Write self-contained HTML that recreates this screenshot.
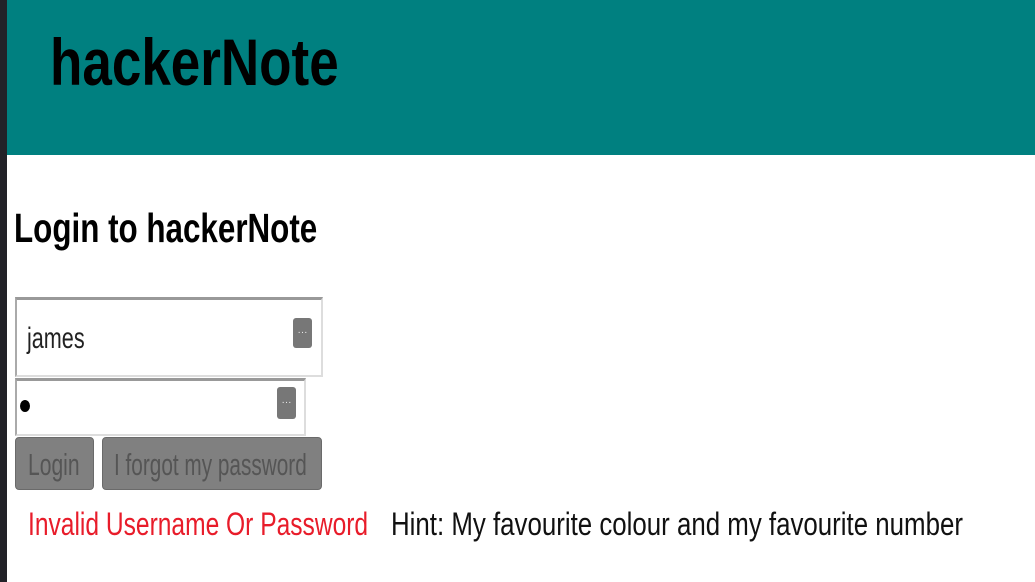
<!DOCTYPE html>
<html><head><style>
body{margin:0;width:1035px;height:582px;overflow:hidden;background:#fff;font-family:"Liberation Sans",sans-serif;position:relative}
.strip{position:absolute;left:0;top:0;width:7px;height:582px;background:#222228}
.hdr{position:absolute;left:7px;top:0;width:1028px;height:155px;background:#008080}
.t{position:absolute;white-space:nowrap;transform-origin:0 0}
.in{position:absolute;background:#fff;border:2px solid #ddd;border-top:3px solid #999;border-left:2px solid #aaa;box-sizing:border-box}
.ic{position:absolute;background:#777;border-radius:3px;color:#eee;font-size:10px;text-align:center}
.btn{position:absolute;background:#808080;border-radius:4px;color:#555;border:1px solid #6a6a6a;box-sizing:border-box}
</style></head><body>
<div class="strip"></div>
<div class="hdr"></div>
<div class="t" style="left:50px;top:24px;font-size:66px;font-weight:bold;color:#000;transform:scaleX(0.803)">hackerNote</div>
<div class="t" style="left:14px;top:205px;font-size:41px;font-weight:bold;transform:scaleX(0.765)">Login to hackerNote</div>
<div class="in" style="left:15px;top:297px;width:308px;height:80px"></div>
<div class="t" style="left:27px;top:322px;font-size:30px;color:#222;transform:scaleX(0.72)">james</div>
<div class="ic" style="left:293px;top:318px;width:19px;height:30px;line-height:30px">···</div>
<div class="in" style="left:15px;top:378px;width:291px;height:58px"></div>
<div style="position:absolute;left:20px;top:400px;width:10px;height:12px;border-radius:50%;background:#000"></div>
<div class="ic" style="left:277px;top:387px;width:19px;height:32px;line-height:32px">···</div>
<div class="btn" style="left:15px;top:437px;width:79px;height:53px"></div>
<div class="t" style="left:28px;top:447px;font-size:31px;color:#555;transform:scaleX(0.68)">Login</div>
<div class="btn" style="left:102px;top:437px;width:220px;height:53px"></div>
<div class="t" style="left:114px;top:447px;font-size:31px;color:#555;transform:scaleX(0.67)">I forgot my password</div>
<div class="t" style="left:28px;top:506px;font-size:32px;color:#e81c2a;transform:scaleX(0.768)">Invalid Username Or Password</div>
<div class="t" style="left:391px;top:506px;font-size:32px;color:#111;transform:scaleX(0.808)">Hint: My favourite colour and my favourite number</div>
</body></html>
